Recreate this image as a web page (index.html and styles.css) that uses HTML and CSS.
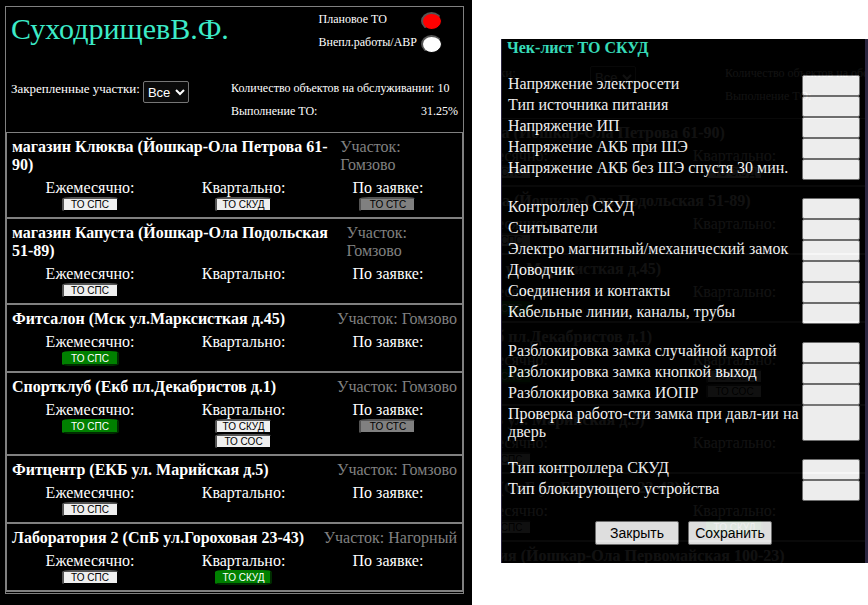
FILE: index.html
```html
<!DOCTYPE html>
<html lang="ru">
<head>
    <title>Чек-лист ТО</title>
    <meta charset="utf-8" />
    <link rel="stylesheet" href="styles.css">
</head>
<body>
    <main class="main">
        <div class="box">
            <header class="header">
                <div class="header-row">
                    <h1 class="name">СуходрищевВ.Ф.</h1>
                    <div class="modes">
                        <label for="plan">Плановое ТО</label>
                        <button type="button" id="plan" class="lamp lamp-red"></button>
                        <label for="avr">Внепл.работы/АВР</label>
                        <button type="button" id="avr" class="lamp"></button>
                    </div>
                </div>
                <div class="header-row">
                    <div class="area">
                        <label for="area">Закрепленные участки:</label>
                        <select id="area" class="select"><option>Все</option></select>
                    </div>
                    <div class="stats">
                        <div class="stat"><span>Количество объектов на обслуживании:</span><span>10</span></div>
                        <div class="stat stat-wide"><span>Выполнение ТО:</span><span>31.25%</span></div>
                    </div>
                </div>
            </header>
            <section class="list">
                <div class="object">
                    <div class="object-title"><b>магазин Клюква (Йошкар-Ола Петрова 61-90)</b><span class="place">Участок: Гомзово</span></div>
                    <div class="works">
                        <div class="work">Ежемесячно:<button class="to">ТО СПС</button></div>
                        <div class="work">Квартально:<button class="to">ТО СКУД</button></div>
                        <div class="work">По заявке:<button class="to to-off">ТО СТС</button></div>
                    </div>
                </div>
                <div class="object">
                    <div class="object-title"><b>магазин Капуста (Йошкар-Ола Подольская 51-89)</b><span class="place">Участок: Гомзово</span></div>
                    <div class="works">
                        <div class="work">Ежемесячно:<button class="to">ТО СПС</button></div>
                        <div class="work">Квартально:</div>
                        <div class="work">По заявке:</div>
                    </div>
                </div>
                <div class="object">
                    <div class="object-title"><b>Фитсалон (Мск ул.Марксисткая д.45)</b><span class="place">Участок: Гомзово</span></div>
                    <div class="works">
                        <div class="work">Ежемесячно:<button class="to to-done">ТО СПС</button></div>
                        <div class="work">Квартально:</div>
                        <div class="work">По заявке:</div>
                    </div>
                </div>
                <div class="object">
                    <div class="object-title"><b>Спортклуб (Екб пл.Декабристов д.1)</b><span class="place">Участок: Гомзово</span></div>
                    <div class="works">
                        <div class="work">Ежемесячно:<button class="to to-done">ТО СПС</button></div>
                        <div class="work">Квартально:<button class="to">ТО СКУД</button><button class="to">ТО СОС</button></div>
                        <div class="work">По заявке:<button class="to to-off">ТО СТС</button></div>
                    </div>
                </div>
                <div class="object">
                    <div class="object-title"><b>Фитцентр (ЕКБ ул. Марийская д.5)</b><span class="place">Участок: Гомзово</span></div>
                    <div class="works">
                        <div class="work">Ежемесячно:<button class="to">ТО СПС</button></div>
                        <div class="work">Квартально:</div>
                        <div class="work">По заявке:</div>
                    </div>
                </div>
                <div class="object">
                    <div class="object-title"><b>Лаборатория 2 (СпБ ул.Гороховая 23-43)</b><span class="place">Участок: Нагорный</span></div>
                    <div class="works">
                        <div class="work">Ежемесячно:<button class="to">ТО СПС</button></div>
                        <div class="work">Квартально:<button class="to to-done">ТО СКУД</button></div>
                        <div class="work">По заявке:</div>
                    </div>
                </div>
            </section>
        </div>
    </main>

    <aside class="side">
        <div class="window">
            <!-- список объектов под окном чек-листа -->
            <div class="under" aria-hidden="true" inert>
                <div class="under-header">
                    <span class="under-label">Закрепленные участки:</span>
                    <select class="select"><option>Все</option></select>
                    <div class="stats">
                        <div class="stat"><span>Количество объектов на обслуживании:</span></div>
                        <div class="stat"><span>Выполнение ТО:</span></div>
                    </div>
                </div>
                <div class="object">
                    <div class="object-title"><b>магазин Клюква (Йошкар-Ола Петрова 61-90)</b></div>
                    <div class="works">
                        <div class="work">Ежемесячно:<button class="to">ТО СПС</button></div>
                        <div class="work">Квартально:<button class="to">ТО СКУД</button></div>
                    </div>
                </div>
                <div class="object">
                    <div class="object-title"><b>магазин Капуста (Йошкар-Ола Подольская 51-89)</b></div>
                    <div class="works">
                        <div class="work">Ежемесячно:<button class="to">ТО СПС</button></div>
                        <div class="work">Квартально:</div>
                    </div>
                </div>
                <div class="object">
                    <div class="object-title"><b>Фитсалон (Мск ул.Марксисткая д.45)</b></div>
                    <div class="works">
                        <div class="work">Ежемесячно:<button class="to to-done">ТО СПС</button></div>
                        <div class="work">Квартально:</div>
                    </div>
                </div>
                <div class="object">
                    <div class="object-title"><b>Спортклуб (Екб пл.Декабристов д.1)</b></div>
                    <div class="works">
                        <div class="work">Ежемесячно:<button class="to to-done">ТО СПС</button></div>
                        <div class="work">Квартально:<button class="to">ТО СКУД</button><button class="to">ТО СОС</button></div>
                    </div>
                </div>
                <div class="object">
                    <div class="object-title"><b>Фитцентр (ЕКБ ул. Марийская д.5)</b></div>
                    <div class="works">
                        <div class="work">Ежемесячно:<button class="to">ТО СПС</button></div>
                        <div class="work">Квартально:</div>
                    </div>
                </div>
                <div class="object">
                    <div class="object-title"><b>Лаборатория 2 (СпБ ул.Гороховая 23-43)</b></div>
                    <div class="works">
                        <div class="work">Ежемесячно:<button class="to">ТО СПС</button></div>
                        <div class="work">Квартально:<button class="to to-done">ТО СКУД</button></div>
                    </div>
                </div>
                <div class="object">
                    <div class="object-title"><b>Фотолаборатория (Йошкар-Ола Первомайская 100-23)</b></div>
                </div>
            </div>

            <form class="modal">
                <h2 class="modal-title">Чек-лист ТО СКУД</h2>
                <div class="group">
                    <div class="field"><label for="f1">Напряжение электросети</label><input type="text" id="f1"></div>
                    <div class="field"><label for="f2">Тип источника питания</label><input type="text" id="f2"></div>
                    <div class="field"><label for="f3">Напряжение ИП</label><input type="text" id="f3"></div>
                    <div class="field"><label for="f4">Напряжение АКБ при ШЭ</label><input type="text" id="f4"></div>
                    <div class="field"><label for="f5">Напряжение АКБ без ШЭ спустя 30 мин.</label><input type="text" id="f5"></div>
                </div>
                <div class="group">
                    <div class="field"><label for="f6">Контроллер СКУД</label><input type="text" id="f6"></div>
                    <div class="field"><label for="f7">Считыватели</label><input type="text" id="f7"></div>
                    <div class="field"><label for="f8">Электро магнитный/механический замок</label><input type="text" id="f8"></div>
                    <div class="field"><label for="f9">Доводчик</label><input type="text" id="f9"></div>
                    <div class="field"><label for="f10">Соединения и контакты</label><input type="text" id="f10"></div>
                    <div class="field"><label for="f11">Кабельные линии, каналы, трубы</label><input type="text" id="f11"></div>
                </div>
                <div class="group">
                    <div class="field"><label for="f12">Разблокировка замка случайной картой</label><input type="text" id="f12"></div>
                    <div class="field"><label for="f13">Разблокировка замка кнопкой выход</label><input type="text" id="f13"></div>
                    <div class="field"><label for="f14">Разблокировка замка ИОПР</label><input type="text" id="f14"></div>
                    <div class="field"><label for="f15">Проверка работо-сти замка при давл-ии на дверь</label><input type="text" id="f15"></div>
                </div>
                <div class="group">
                    <div class="field"><label for="f16">Тип контроллера СКУД</label><input type="text" id="f16"></div>
                    <div class="field"><label for="f17">Тип блокирующего устройства</label><input type="text" id="f17"></div>
                </div>
                <div class="actions">
                    <button type="button" class="action">Закрыть</button>
                    <button type="button" class="action">Сохранить</button>
                </div>
            </form>
        </div>
    </aside>
</body>
</html>
```

FILE: styles.css
```css
* {
    box-sizing: border-box;
}
body {
    margin: 0;
    display: grid;
    grid-template-columns: 472fr 396fr;
    min-height: 100vh;
    background-color: #fff;
    color: #fff;
    font-family: 'Liberation Serif', 'Times New Roman', serif;
    font-size: 16px;
    line-height: 18px;
}
.main {
    background-color: #000;
    padding: 6px 8px 8px 5px;
}
.box {
    border: 1px solid gray;
    padding-bottom: 1px;
}

/* header */
.header {
    height: 125px;
    padding: 4px 5px;
    font-size: 12px;
    line-height: 14px;
}
.header-row {
    display: flex;
    justify-content: space-between;
    height: 70px;
}
.name {
    margin: 0;
    padding-top: 1px;
    font-size: 30px;
    line-height: 34px;
    font-weight: normal;
    color: #3cebc8;
}
.modes {
    display: grid;
    grid-template-columns: auto auto;
    grid-auto-rows: 23px;
    column-gap: 4px;
    padding: 1px 16px 0 0;
}
.lamp {
    width: 21px;
    height: 18px;
    padding: 0;
    border: 2px outset #000;
    border-right-width: 1px;
    border-bottom-width: 1px;
    border-radius: 50%;
    background-color: #fff;
}
.lamp-red {
    background-color: red;
}
.area {
    display: flex;
    align-items: flex-start;
    gap: 3px;
    font-size: 13px;
    line-height: 16px;
}
.select {
    width: 46px;
    height: 22px;
    background-color: #0a0a0a;
    color: #fff;
    border: 1px solid #767676;
    border-radius: 2px;
    font-family: 'Liberation Sans', Arial, sans-serif;
    font-size: 13px;
}
.stats {
    width: 227px;
}
.stat {
    display: flex;
    gap: 3px;
    height: 23px;
}
.stat-wide {
    justify-content: space-between;
}

/* objects */
.list {
    border-bottom: 1px solid gray;
}
.object {
    border: 1px solid gray;
    padding: 5px;
}
.object-title {
    display: flex;
    justify-content: space-between;
    margin-bottom: 5px;
}
.place {
    color: gray;
}
.works {
    display: flex;
    justify-content: space-around;
}
.work {
    display: flex;
    flex-direction: column;
    align-items: center;
}
.to {
    width: 57px;
    height: 15px;
    padding: 0;
    border: 2px outset #000;
    border-radius: 10px / 2px;
    background-color: #efefef;
    color: #000;
    font-family: 'Liberation Sans', Arial, sans-serif;
    font-size: 10px;
    line-height: 11px;
}
.to-off {
    background-color: gray;
}
.to-done {
    background-color: green;
    border-color: green;
    color: #fff;
}

/* checklist */
.side {
    padding: 39px 0 0 29px;
}
.window {
    position: relative;
    overflow: hidden;
    background-color: #000;
    border-left: 1px solid #2b2640;
    border-right: 3px solid #2b2640;
}
.under {
    position: absolute;
    top: 0;
    left: -120px;
    width: 700px;
}
.under-header {
    display: grid;
    grid-template-columns: 203px 135px 228px;
    align-items: start;
    height: 79px;
    padding: 27px 0 0 5px;
    font-size: 12px;
    line-height: 14px;
}
.under-label {
    font-size: 13px;
}
.under .works {
    display: grid;
    grid-template-columns: 231px 231px;
    justify-content: start;
}
.modal {
    position: relative;
    padding: 0 5px 18px;
    background-color: #000;
    opacity: 0.93;
}
.modal-title {
    margin: 0 0 18px;
    font-size: 16px;
    color: #3cebc8;
}
.group {
    margin-bottom: 18px;
}
.field {
    display: grid;
    grid-template-columns: 1fr 58px;
    min-height: 21px;
    padding-left: 1px;
}
.field input {
    width: 100%;
    min-width: 0;
    padding: 0 4px;
    border: 1px solid #767676;
    border-radius: 2px;
    background-color: #fff;
}
.actions {
    display: flex;
    justify-content: center;
    gap: 9px;
    padding-top: 2px;
}
.action {
    width: 84px;
    height: 24px;
    padding: 0;
    border: 1px solid #767676;
    border-radius: 2px;
    background-color: #efefef;
    color: #000;
    font-family: 'Liberation Sans', Arial, sans-serif;
    font-size: 14px;
}
```
